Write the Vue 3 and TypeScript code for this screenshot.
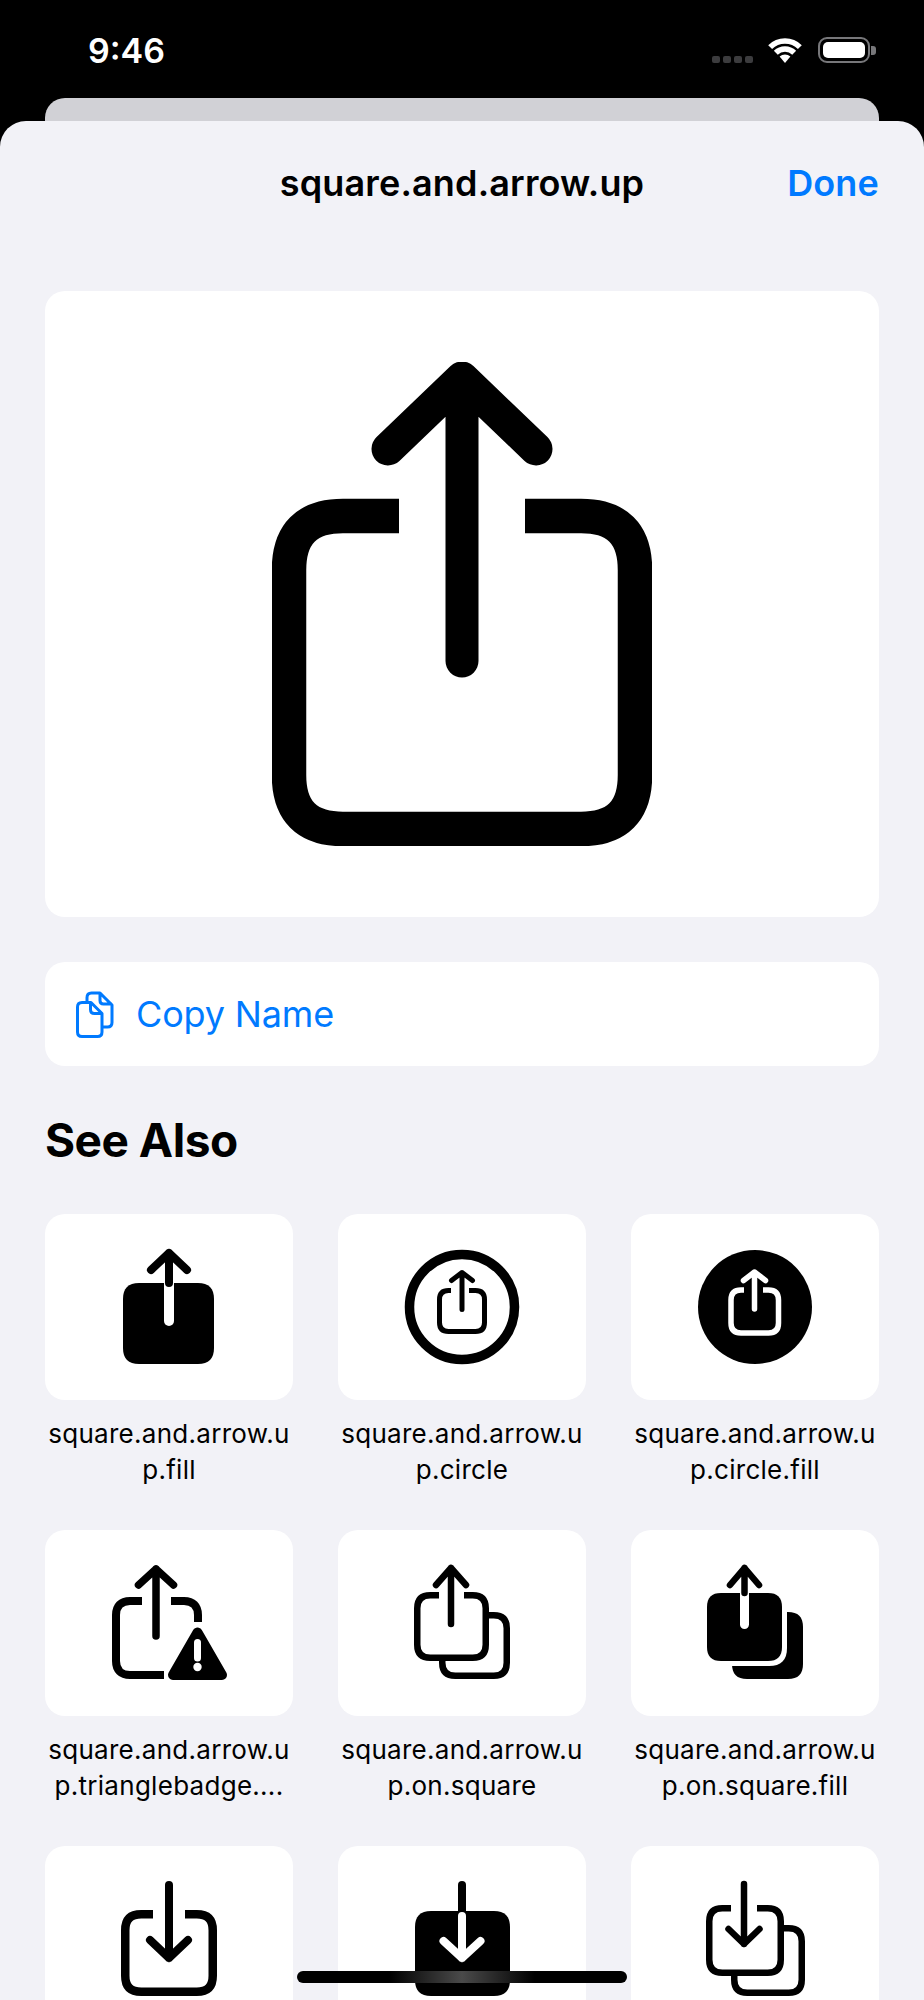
<template>
  <div class="screen">
    <div class="status">
      <span class="time">9:46</span>
      <div class="status-icons">
        <div class="signal">
          <i v-for="n in 4" :key="n"></i>
        </div>
        <svg class="wifi" width="36" height="26" viewBox="0 0 36 26" fill="none">
          <path d="M3.15 10.15A21 21 0 0 1 32.85 10.15" stroke="#fff" stroke-width="5.5" />
          <path d="M8.8 15.8A13 13 0 0 1 27.2 15.8" stroke="#fff" stroke-width="5.5" />
          <path d="M18 26L12.6 19.6A8 8 0 0 1 23.4 19.6Z" fill="#fff" />
        </svg>
        <div class="battery">
          <div class="battery-body"><div class="battery-level"></div></div>
          <div class="battery-nub"></div>
        </div>
      </div>
    </div>
    <div class="back-sheet"></div>

    <div class="sheet">
      <div class="nav">
        <span class="nav-title">square.and.arrow.up</span>
        <span class="nav-done">Done</span>
      </div>

      <div class="preview">
        <svg width="380" height="484" viewBox="272 361 380 484" fill="none">
          <path :d="openSquare(289, 515, 635, 828, 54, 399, 525)" stroke="#000" stroke-width="34.5" />
          <path
            d="M462 377V660M388 448L462 377L536 448"
            stroke="#000"
            stroke-width="33"
            stroke-linecap="round"
            stroke-linejoin="round"
          />
        </svg>
      </div>

      <div class="copy-row">
        <svg class="copy-icon" width="38" height="47" viewBox="0 0 38 47" fill="none">
          <path
            d="M11 10V6.5Q11 2 15.500 2H24L36 14V31.500Q36 36 31.500 36H26M24 2V9.500Q24 13 27.500 13H36"
            stroke="#007aff"
            stroke-width="3"
            stroke-linejoin="round"
          />
          <path
            d="M6 11.500H15L26 22.500V41Q26 45.500 21.500 45.500H6Q1.500 45.500 1.500 41V16Q1.500 11.500 6 11.500ZM14.500 11.500V18.500Q14.500 22.500 18.500 22.500H26"
            stroke="#007aff"
            stroke-width="3"
            stroke-linejoin="round"
          />
        </svg>
        <span class="copy-label">Copy Name</span>
      </div>

      <h2 class="section-title">See Also</h2>

      <div class="symbol-grid">
        <div v-for="(item, index) in symbols" :key="index" class="symbol">
          <div class="symbol-tile">
            <svg width="248" height="186" viewBox="0 0 248 186">
              <path
                v-for="(s, i) in item.shapes"
                :key="i"
                :d="s.d"
                :fill="s.fill ?? 'none'"
                :stroke="s.stroke ?? 'none'"
                :stroke-width="s.width ?? 0"
                :stroke-linecap="s.butt ? 'butt' : 'round'"
                stroke-linejoin="round"
              />
            </svg>
          </div>
          <p v-if="item.label" class="symbol-label">{{ item.label }}</p>
        </div>
      </div>
    </div>

    <div class="home-indicator"></div>
  </div>
</template>

<script setup lang="ts">
interface Shape {
  d: string
  fill?: string
  stroke?: string
  width?: number
  butt?: boolean
}

const line = (d: string, width: number, stroke = '#000', butt = false): Shape => ({ d, width, stroke, butt })
const solid = (d: string, fill = '#000'): Shape => ({ d, fill })

// corners are a bit tighter than a circle, like the SF Symbols squares
const K = 0.33

function openSquare(x0: number, y0: number, x1: number, y1: number, r: number, g0: number, g1: number) {
  const c = r * K
  return (
    `M${g0} ${y0}H${x0 + r}C${x0 + c} ${y0} ${x0} ${y0 + c} ${x0} ${y0 + r}` +
    `V${y1 - r}C${x0} ${y1 - c} ${x0 + c} ${y1} ${x0 + r} ${y1}` +
    `H${x1 - r}C${x1 - c} ${y1} ${x1} ${y1 - c} ${x1} ${y1 - r}` +
    `V${y0 + r}C${x1} ${y0 + c} ${x1 - c} ${y0} ${x1 - r} ${y0}H${g1}`
  )
}

function roundRect(x: number, y: number, w: number, h: number, r: number) {
  const mid = x + w / 2
  return openSquare(x, y, x + w, y + h, r, mid, mid) + 'Z'
}

// the part of a back square that shows from behind the front one
function backSquare(x0: number, y0: number, x1: number, y1: number, r: number, startX: number, endY: number) {
  const c = r * K
  return (
    `M${startX} ${y0}H${x1 - r}C${x1 - c} ${y0} ${x1} ${y0 + c} ${x1} ${y0 + r}` +
    `V${y1 - r}C${x1} ${y1 - c} ${x1 - c} ${y1} ${x1 - r} ${y1}` +
    `H${x0 + r}C${x0 + c} ${y1} ${x0} ${y1 - c} ${x0} ${y1 - r}V${endY}`
  )
}

const circle = (cx: number, cy: number, r: number) =>
  `M${cx - r} ${cy}A${r} ${r} 0 1 1 ${cx + r} ${cy}A${r} ${r} 0 1 1 ${cx - r} ${cy}Z`

const arrowUp = (cx: number, apex: number, bottom: number, dx: number, headY: number) =>
  `M${cx} ${bottom}V${apex}M${cx - dx} ${headY}L${cx} ${apex}L${cx + dx} ${headY}`

const arrowDown = (cx: number, top: number, tip: number, dx: number, headY: number) =>
  `M${cx} ${top}V${tip}M${cx - dx} ${headY}L${cx} ${tip}L${cx + dx} ${headY}`

// the last row runs off the screen, its labels are below the fold
const symbols: { label?: string; shapes: Shape[] }[] = [
  {
    label: 'square.and.arrow.up.fill',
    shapes: [
      solid(roundRect(78, 69, 91, 81, 16)),
      line('M124 60V107', 10, '#fff'),
      line(arrowUp(124, 39, 69, 18, 56), 8),
    ],
  },
  {
    label: 'square.and.arrow.up.circle',
    shapes: [
      line(circle(124, 93, 52.5), 9.5),
      line(openSquare(101.5, 76.5, 146.5, 117.5, 9, 113, 131), 5, '#000', true),
      line(arrowUp(124, 58.5, 95.5, 10.5, 66.5), 5),
    ],
  },
  {
    label: 'square.and.arrow.up.circle.fill',
    shapes: [
      solid(circle(124, 93, 57)),
      line(openSquare(100, 76, 147.5, 119, 10, 113, 132), 5.5, '#fff', true),
      line(arrowUp(123.5, 58, 95, 11, 66.5), 5.5, '#fff'),
    ],
  },
  {
    label: 'square.and.arrow.up.trianglebadge....',
    shapes: [
      line(
        'M97 71H85C76 71 71 76 71 85V131C71 140 76 145 85 145H119M126 71H139C148 71 153 76 153 85V92',
        8,
        '#000',
        true,
      ),
      line(arrowUp(111, 39, 106, 17.5, 55), 7.5),
      { d: 'M152.500 102.500L128 145H177Z', fill: '#000', stroke: '#000', width: 10 },
      line('M152.500 112.500V128', 7, '#fff'),
      solid(circle(152.5, 137, 4.2), '#fff'),
    ],
  },
  {
    label: 'square.and.arrow.up.on.square',
    shapes: [
      line(openSquare(79.25, 65.25, 147.75, 127.75, 13, 101, 126), 6.5, '#000', true),
      line(backSquare(104.25, 85.25, 168.75, 145.75, 13, 151, 130), 6.5, '#000', true),
      line(arrowUp(113, 38, 94, 15, 55), 6.5),
    ],
  },
  {
    label: 'square.and.arrow.up.on.square.fill',
    shapes: [
      solid(roundRect(101, 82, 71, 67, 15)),
      solid(roundRect(71, 58, 85, 78, 18), '#fff'),
      solid(roundRect(76, 63, 75, 68, 14)),
      line('M113.500 55V94.500', 9, '#fff'),
      line(arrowUp(113.5, 38, 63, 14.5, 55), 6.5),
    ],
  },
  {
    shapes: [
      line(openSquare(80.25, 68.25, 167.75, 145.75, 16, 108, 140), 8.5, '#000', true),
      line(arrowDown(124, 39, 112, 19, 94), 8),
    ],
  },
  {
    shapes: [
      solid(roundRect(77, 65, 95, 85, 16)),
      line('M124 39V66', 8),
      line(arrowDown(124, 70, 112, 18.5, 95), 8, '#fff'),
    ],
  },
  {
    shapes: [
      line(openSquare(78.25, 62.25, 149.75, 126.75, 13, 100, 126), 6.5, '#000', true),
      line(backSquare(103.25, 82.25, 170.75, 146.75, 13, 153, 130), 6.5, '#000', true),
      line(arrowDown(113, 38, 98, 15.5, 83), 6.5),
    ],
  },
]
</script>

<style scoped>
.screen {
  position: relative;
  height: 2000px;
  overflow: hidden;
  background: #000;
  font-family: Inter, 'Noto Sans', sans-serif;
}

.status {
  height: 98px;
  padding: 0 48px 0 88px;
  box-sizing: border-box;
  display: flex;
  justify-content: space-between;
  align-items: flex-start;
  color: #fff;
}

.time {
  margin-top: 29px;
  font-size: 34px;
  line-height: 44px;
  font-weight: 600;
}

.status-icons {
  margin-top: 37px;
  display: flex;
  align-items: flex-end;
}

.signal {
  display: flex;
  gap: 3px;
  margin-right: 14px;
}

.signal i {
  width: 8px;
  height: 7px;
  border-radius: 2px;
  background: #3c3c3e;
}

.wifi {
  margin-right: 15px;
}

.battery {
  display: flex;
  align-items: center;
}

.battery-body {
  width: 52px;
  height: 26px;
  box-sizing: border-box;
  padding: 3px;
  border: 2px solid #77777a;
  border-radius: 9px;
}

.battery-level {
  height: 100%;
  border-radius: 5px;
  background: #fff;
}

.battery-nub {
  width: 5px;
  height: 9px;
  margin-left: 1px;
  border-radius: 0 3px 3px 0;
  background: #77777a;
}

.back-sheet {
  height: 23px;
  margin: 0 45px;
  border-radius: 20px 20px 0 0;
  background: #d1d1d6;
}

.sheet {
  height: 1879px;
  padding: 0 45px;
  box-sizing: border-box;
  border-radius: 26px 26px 0 0;
  background: #f2f2f7;
}

.nav {
  height: 124px;
  margin-bottom: 46px;
  display: flex;
  align-items: center;
  justify-content: center;
  position: relative;
  color: #000;
}

.nav-title {
  font-size: 36px;
  font-weight: 600;
  letter-spacing: 0.15px;
}

.nav-done {
  position: absolute;
  right: 0;
  font-size: 36px;
  font-weight: 600;
  letter-spacing: 0.15px;
  color: #007aff;
}

.preview {
  height: 626px;
  display: flex;
  align-items: center;
  justify-content: center;
  border-radius: 20px;
  background: #fff;
}

.copy-row {
  height: 104px;
  margin-top: 45px;
  padding-left: 31px;
  display: flex;
  align-items: center;
  gap: 22px;
  border-radius: 20px;
  background: #fff;
}

.copy-label {
  font-size: 36px;
  color: #007aff;
  letter-spacing: -0.15px;
}

.section-title {
  height: 148px;
  margin: 0;
  display: flex;
  align-items: center;
  font-size: 46px;
  font-weight: 700;
  color: #000;
  letter-spacing: -0.5px;
}

.symbol-grid {
  display: grid;
  grid-template-columns: repeat(3, 248px);
  column-gap: 45px;
  row-gap: 42px;
}

.symbol-tile {
  height: 186px;
  display: flex;
  border-radius: 20px;
  background: #fff;
}

.symbol-label {
  margin: 16px 0 0;
  height: 72px;
  font-size: 26px;
  line-height: 36px;
  letter-spacing: 0.28px;
  text-align: center;
  word-break: break-all;
  color: #000;
}

.home-indicator {
  position: absolute;
  left: 297px;
  top: 1971px;
  width: 330px;
  height: 12px;
  border-radius: 6px;
  background: linear-gradient(90deg, #000 0%, #000 28%, #4a4a4a 50%, #000 72%, #000 100%);
}
</style>
